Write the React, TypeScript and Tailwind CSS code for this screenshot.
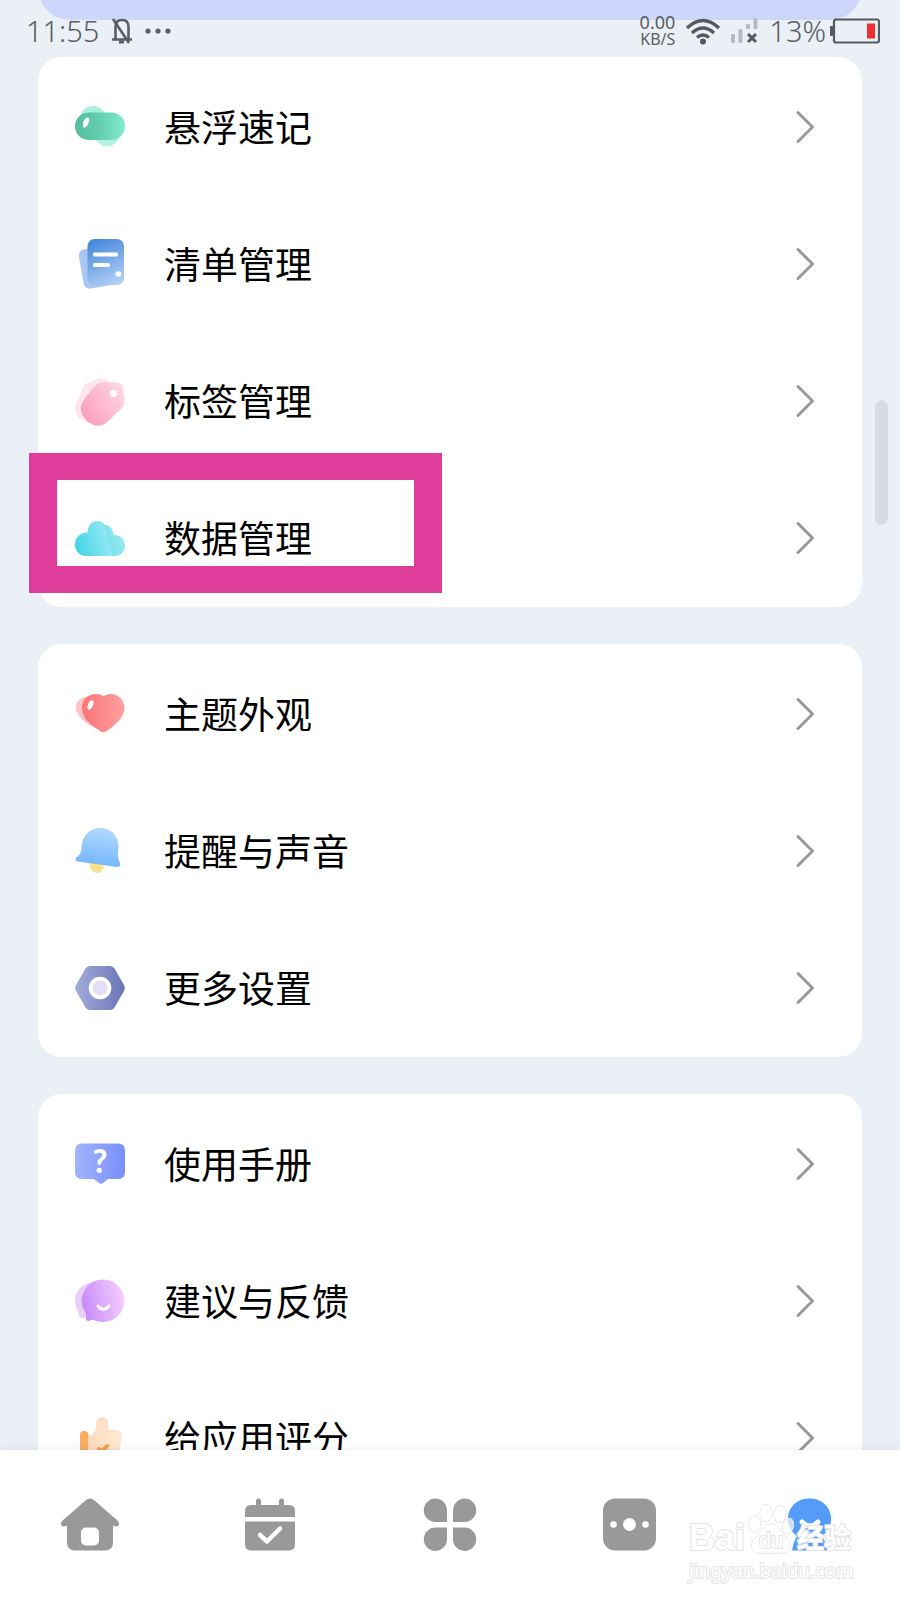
import type { ReactNode } from 'react';

type Item = {
  label: string;
  icon: ReactNode;
  highlighted?: boolean;
};

const PillIcon = () => (
  <svg viewBox="0 0 50 50" className="size-[50px] shrink-0" aria-hidden="true">
    <defs>
      <linearGradient id="pill" x1="0" y1="0" x2="1" y2="0">
        <stop offset="0" stopColor="#56bd9f" />
        <stop offset="0.5" stopColor="#65ceb0" />
        <stop offset="0.51" stopColor="#63d0b0" />
        <stop offset="1" stopColor="#80ebcd" />
      </linearGradient>
    </defs>
    <circle cx="18" cy="17" r="13" fill="#a5efdb" />
    <circle cx="32" cy="32" r="12.5" fill="#b5f3e3" />
    <rect x="0" y="10.5" width="50" height="27.500" rx="13.7" fill="url(#pill)" />
    <ellipse cx="11" cy="20.5" rx="2.6" ry="5.4" fill="#fff" transform="rotate(24 11 20.5)" />
  </svg>
);

const ListIcon = () => (
  <svg viewBox="0 0 50 50" className="size-[50px] shrink-0" aria-hidden="true">
    <defs>
      <linearGradient id="doc" x1="0.3" y1="0" x2="0.7" y2="1">
        <stop offset="0" stopColor="#4789dd" />
        <stop offset="1" stopColor="#b1cff5" />
      </linearGradient>
    </defs>
    <rect x="6" y="8" width="34" height="40" rx="6" fill="#a9c7f0" transform="rotate(-10 23 28)" />
    <rect x="12.500" y="0" width="36.500" height="46" rx="7" fill="url(#doc)" />
    <rect x="18" y="13.500" width="25" height="4" rx="1.500" fill="#fff" />
    <rect x="18" y="24" width="17" height="4" rx="1.500" fill="#fff" />
    <circle cx="43.300" cy="35" r="2.800" fill="#fff" />
  </svg>
);

const TagIcon = () => (
  <svg viewBox="0 0 50 50" className="size-[50px] shrink-0" aria-hidden="true">
    <defs>
      <linearGradient id="tag" x1="0" y1="0.8" x2="1" y2="0.2">
        <stop offset="0" stopColor="#fc9bbd" />
        <stop offset="1" stopColor="#ffd7e2" />
      </linearGradient>
    </defs>
    <path d="M12 7 L23 3 Q27 1 32 4 L44 12 L25 45 Q14 47 7 44 Q2 42 1 36 Q-1 31 2 25 L8 11 Q9 8 12 7Z" fill="#ffe6ed" />
    <path d="M28 6.500 L42 6.500 Q47 7 48 11 L49.500 24 Q50 29 46 33 L32 46 Q27 51 20 49.500 Q13 48 8 40 Q3.500 32 8 25 L19 11 Q23 6.500 28 6.500Z" fill="url(#tag)" />
    <circle cx="38.300" cy="17.500" r="3.500" fill="#fff" />
  </svg>
);

const CloudIcon = () => (
  <svg viewBox="0 0 50 50" className="size-[50px] shrink-0" aria-hidden="true">
    <defs>
      <linearGradient id="cloud" x1="0" y1="0.6" x2="1" y2="0.4">
        <stop offset="0" stopColor="#45d5e5" />
        <stop offset="0.64" stopColor="#8de8f2" />
        <stop offset="0.65" stopColor="#7fe3ee" />
        <stop offset="1" stopColor="#98e9f2" />
      </linearGradient>
    </defs>
    <path d="M11 43 C4 43 0 37.500 0 31.500 C0 24 5.500 19.500 12.500 19.500 C13 12 17 8 22.500 8 C26 8 28.500 10 30 12 C35 12 38.500 17 38.500 22 C45.500 22 50 26.500 50 32.500 C50 38.500 45.500 43 40 43Z" fill="url(#cloud)" />
  </svg>
);

const HeartIcon = () => (
  <svg viewBox="0 0 50 50" className="size-[50px] shrink-0" aria-hidden="true">
    <defs>
      <linearGradient id="heart" x1="0" y1="0" x2="1" y2="0">
        <stop offset="0" stopColor="#fa7477" />
        <stop offset="1" stopColor="#fea09f" />
      </linearGradient>
    </defs>
    <path d="M25 41 C13 36 1 29 1 18 C1 11 8 7 16 7 L38 9 L31 41Z" fill="#fcc4c6" />
    <path d="M28.500 7.500 C33 4.500 37 4.500 41 6 C46 8 49.500 13 49.500 19.500 C49 29 40 36.500 31 42.500 Q28.500 44 26 42.500 C17 37 7.500 30 7 19.500 C6.500 13 10.500 8 15.500 6 C20 4.500 25 4.500 28.500 7.500Z" fill="url(#heart)" />
    <ellipse cx="15.500" cy="16" rx="2.400" ry="5" fill="#fff" transform="rotate(24 15.500 16)" />
  </svg>
);

const BellIcon = () => (
  <svg viewBox="0 0 50 50" className="size-[50px] shrink-0" aria-hidden="true">
    <defs>
      <linearGradient id="bell" x1="0.6" y1="0" x2="0.4" y2="1">
        <stop offset="0" stopColor="#b3daff" />
        <stop offset="1" stopColor="#71b5fc" />
      </linearGradient>
    </defs>
    <path d="M14 37 Q22 36 29 40 Q28 47 22 47 Q15 46 14 37Z" fill="#fce288" />
    <path d="M6.500 21 C7.500 9 15 2 25.500 2 C36 2 43.500 10 43.500 20 L43 29 C42.500 32 44 34 45 37 C46 40 44 41.500 42 41 L3 35.500 C0 35 0 32 2 31 C5 29 6.500 26 6.500 21Z" fill="url(#bell)" />
  </svg>
);

const GearIcon = () => (
  <svg viewBox="0 0 50 50" className="size-[50px] shrink-0" aria-hidden="true">
    <defs>
      <linearGradient id="gear" x1="0" y1="0" x2="1" y2="0">
        <stop offset="0" stopColor="#a3abdc" />
        <stop offset="1" stopColor="#6b75b5" />
      </linearGradient>
    </defs>
    <path d="M15 3 H35 Q38 3 39.500 5.500 L49 22 Q50.500 25 49 28 L39.500 44.500 Q38 47 35 47 H15 Q12 47 10.500 44.500 L1 28 Q-0.500 25 1 22 L10.500 5.500 Q12 3 15 3Z" fill="url(#gear)" />
    <circle cx="25" cy="25" r="11.300" fill="#fff" />
    <circle cx="25" cy="25" r="7.600" fill="#e0e1f7" />
  </svg>
);

const ManualIcon = () => (
  <svg viewBox="0 0 50 50" className="size-[50px] shrink-0" aria-hidden="true">
    <defs>
      <linearGradient id="manual" x1="0" y1="0" x2="1" y2="0">
        <stop offset="0" stopColor="#a3b3fc" />
        <stop offset="1" stopColor="#768ffa" />
      </linearGradient>
    </defs>
    <path d="M7 4.500 H43 Q50 4.500 50 11.500 V33 Q50 40 43 40 H33 L28 44 Q26 45.500 24 44 L19 40 H7 Q0 40 0 33 V11.500 Q0 4.500 7 4.500Z" fill="url(#manual)" />
    <text x="25" y="34" textAnchor="middle" fontSize="32" fontWeight="900" fontFamily="Lato, sans-serif" fill="#fff">?</text>
  </svg>
);

const FeedbackIcon = () => (
  <svg viewBox="0 0 50 50" className="size-[50px] shrink-0" aria-hidden="true">
    <defs>
      <linearGradient id="feedback" x1="0" y1="0.6" x2="1" y2="0.4">
        <stop offset="0" stopColor="#c68bf8" />
        <stop offset="1" stopColor="#f5cdfd" />
      </linearGradient>
    </defs>
    <path d="M22 6 C9 5 0 14 0 25 C0 30 3 34 3.500 37 Q3 42 7 42 L22 41Z" fill="#e8cffb" />
    <path d="M28.500 3.500 A21.300 21.300 0 1 1 20 44.500 Q17 43 14 45 Q10.500 45.500 11 41 Q11.500 38 10 36 A21.300 21.300 0 0 1 28.500 3.500Z" fill="url(#feedback)" />
    <path d="M23 30 Q28 36.500 34 30" fill="none" stroke="#fff" strokeWidth="3" strokeLinecap="round" />
  </svg>
);

const RateIcon = () => (
  <svg viewBox="0 0 50 50" className="size-[50px] shrink-0" aria-hidden="true">
    <defs>
      <linearGradient id="rate" x1="0" y1="0" x2="1" y2="0">
        <stop offset="0" stopColor="#fcdcc0" />
        <stop offset="1" stopColor="#ffe8d2" />
      </linearGradient>
    </defs>
    <path d="M14 23 Q21 20 21 14 V10 Q22 4 27 4 Q33 4 33.500 10 V17 H40 Q47 17 47 23 L44 42 Q43 47 38 47 H14Z" fill="url(#rate)" />
    <path d="M5 22 Q5 18 9 18 Q13.500 18 13.500 22 V47 H5Z" fill="#f9ac60" />
    <path d="M24 36 L28 38 L32 33" fill="none" stroke="#f6a04c" strokeWidth="4" strokeLinecap="round" strokeLinejoin="round" />
  </svg>
);

const groups: Item[][] = [
  [
    { label: '悬浮速记', icon: <PillIcon /> },
    { label: '清单管理', icon: <ListIcon /> },
    { label: '标签管理', icon: <TagIcon /> },
    { label: '数据管理', icon: <CloudIcon />, highlighted: true },
  ],
  [
    { label: '主题外观', icon: <HeartIcon /> },
    { label: '提醒与声音', icon: <BellIcon /> },
    { label: '更多设置', icon: <GearIcon /> },
  ],
  [
    { label: '使用手册', icon: <ManualIcon /> },
    { label: '建议与反馈', icon: <FeedbackIcon /> },
    { label: '给应用评分', icon: <RateIcon /> },
  ],
];

function StatusBar() {
  return (
    <header className="absolute inset-x-0 top-0 z-10 flex h-[62px] items-center justify-between pr-5 pl-[26px] font-['Noto_Sans',sans-serif] text-[29px] font-light text-[#5a5d62]">
      <div className="flex items-center gap-3">
        <span>11:55</span>
        <svg viewBox="0 0 22 26" className="h-[26px] w-[22px]" fill="none" stroke="#5a5d62" strokeWidth="2.6" aria-label="静音">
          <path d="M4.500 21 V9 Q4.500 2 11 2 Q17.500 2 17.500 9 V21" />
          <path d="M1 21.500 H21 M2 1 L18 25" />
          <path d="M8 24 H13" strokeWidth="3" />
        </svg>
        <svg viewBox="0 0 26 6" className="h-[6px] w-[26px]" fill="#5a5d62" aria-hidden="true">
          <circle cx="3" cy="3" r="2.600" />
          <circle cx="13" cy="3" r="2.600" />
          <circle cx="23" cy="3" r="2.600" />
        </svg>
      </div>

      <div className="flex items-center">
        <div className="mr-2.5 text-right font-normal">
          <div className="text-[18px] leading-[17px]">0.00</div>
          <div className="text-[16px] leading-[17px]">KB/S</div>
        </div>
        <svg viewBox="0 0 36 28" className="mr-2.5 h-7 w-9" fill="none" stroke="#56595e" strokeWidth="3.4" aria-label="Wi-Fi">
          <path d="M2 11 Q18 -4 34 11" />
          <path d="M7 16 Q18 6 29 16" />
          <path d="M12 20.500 Q18 15.500 24 20.500" />
          <circle cx="18" cy="24.500" r="3" fill="#56595e" stroke="none" />
        </svg>
        <svg viewBox="0 0 28 26" className="mr-2.5 h-[26px] w-7" aria-label="无信号">
          <g fill="#b6bac1">
            <rect x="0" y="16" width="4" height="9" rx="1" />
            <rect x="7.500" y="11" width="4" height="14" rx="1" />
            <rect x="15" y="6" width="4" height="5" rx="1" />
            <rect x="22.500" y="0" width="4" height="11" rx="1" />
          </g>
          <path d="M17 16 L25 24 M25 16 L17 24" stroke="#56595e" strokeWidth="3" />
        </svg>
        <span className="mr-1">13%</span>
        <svg viewBox="0 0 50 26" className="h-[26px] w-[50px]" aria-label="电量">
          <rect x="0" y="8" width="3" height="10" rx="1" fill="#56595e" />
          <rect x="4" y="1.500" width="45" height="23" rx="2" fill="none" stroke="#56595e" strokeWidth="2.200" />
          <rect x="37" y="5.500" width="8" height="15" fill="#f03030" />
        </svg>
      </div>
    </header>
  );
}

function Row({ label, icon, highlighted }: Item) {
  return (
    <li className="relative">
      <a href="#" className="flex h-[137px] items-center pr-[47px] pl-[37px]">
        {icon}
        <span className="ml-[39px] flex-1 text-[37px] text-black">{label}</span>
        <svg viewBox="0 0 20 34" className="h-[34px] w-5" fill="none" stroke="#999" strokeWidth="3" strokeLinecap="round" strokeLinejoin="round" aria-hidden="true">
          <path d="M3 2.500 L17.500 17 L3 31.500" />
        </svg>
      </a>
      {highlighted && (
        <div className="pointer-events-none absolute -top-4 -left-[9px] h-[140px] w-[413px] border-x-[28px] border-y-[27px] border-[#df3d9b]" />
      )}
    </li>
  );
}

function Watermark() {
  return (
    <div className="pointer-events-none absolute right-[49px] bottom-4 w-[162px] font-['Noto_Sans','Noto_Sans_CJK_SC',sans-serif] whitespace-nowrap text-white [-webkit-text-stroke:2px_#e4e4e4] [paint-order:stroke_fill]">
      <div className="flex items-end justify-between">
        <span className="font-['Liberation_Sans',sans-serif] text-[36px] leading-10 font-bold">Bai</span>
        <div className="relative flex h-[54px] w-[46px] items-end justify-center">
          <svg viewBox="0 0 46 54" className="absolute inset-0" fill="#fff" fillOpacity="0.7" stroke="#dedede" aria-hidden="true">
            <ellipse cx="7" cy="20" rx="6" ry="8" />
            <ellipse cx="18" cy="9" rx="6" ry="8.500" />
            <ellipse cx="32" cy="10" rx="6" ry="8.500" transform="rotate(10 32 10)" />
            <ellipse cx="40" cy="22" rx="5.500" ry="8" transform="rotate(15 40 22)" />
            <path d="M23 20 C31 20 32 28 38 33 C45 39 44 49 34 49 H12 C2 49 1 39 8 33 C14 28 15 20 23 20Z" />
          </svg>
          <span className="relative font-['Liberation_Sans',sans-serif] text-[22px] leading-[34px]">du</span>
        </div>
        <span className="text-[27px] leading-10 font-bold">经验</span>
      </div>
      <div className="text-[19px] leading-[26px]">jingyan.baidu.com</div>
    </div>
  );
}

function BottomNav() {
  return (
    <nav className="relative z-10 grid h-[150px] shrink-0 grid-cols-5 bg-white shadow-[0_-2px_8px_rgba(0,0,0,0.06)]">
      <a href="#" aria-label="首页" className="flex items-center justify-center">
        <svg viewBox="0 0 60 60" className="size-[60px]" fill="#999">
          <path d="M26 5 Q30 2 34 5 L58 26 Q60 29 58 31 Q57 32 53 30.500 V47 Q53 55.500 45 55.500 H15 Q7 55.500 7 47 V30.500 Q3 32 2 31 Q0 29 2 26Z" />
          <rect x="21" y="32.500" width="18" height="18" rx="5" fill="#fff" />
        </svg>
      </a>
      <a href="#" aria-label="日程" className="flex items-center justify-center">
        <svg viewBox="0 0 60 60" className="size-[60px]" fill="#999">
          <rect x="16" y="3.500" width="5" height="12" rx="2.500" />
          <rect x="39" y="3.500" width="5" height="12" rx="2.500" />
          <path d="M5 22 V16 Q5 10 11 10 H49 Q55 10 55 16 V22Z" />
          <path d="M5 26.500 H55 V49 Q55 55.500 49 55.500 H11 Q5 55.500 5 49Z" />
          <path d="M20 40 L27 46.500 L40 33.500" fill="none" stroke="#fff" strokeWidth="4.500" strokeLinecap="round" strokeLinejoin="round" />
        </svg>
      </a>
      <a href="#" aria-label="应用" className="flex items-center justify-center">
        <svg viewBox="0 0 60 60" className="size-[60px]" fill="#999">
          <path d="M27 27 H15.500 A11.600 11.700 0 1 1 27 15.500Z" />
          <path d="M33 27 V15.500 A11.600 11.700 0 1 1 44.500 27Z" />
          <path d="M27 32.500 V44 A11.600 11.700 0 1 1 15.500 32.500Z" />
          <path d="M33 32.500 H44.500 A11.600 11.700 0 1 1 33 44Z" />
        </svg>
      </a>
      <a href="#" aria-label="更多" className="flex items-center justify-center">
        <svg viewBox="0 0 60 60" className="size-[60px]" fill="#999">
          <rect x="3" y="3.500" width="53" height="52" rx="12" />
          <g fill="#fff">
            <circle cx="13.500" cy="29.500" r="3.300" />
            <circle cx="29.500" cy="29.500" r="6.500" />
            <circle cx="45.500" cy="29.500" r="3.300" />
          </g>
        </svg>
      </a>
      <a href="#" aria-label="我的" className="flex items-center justify-center">
        <svg viewBox="0 0 60 60" className="size-[60px]" fill="#559bf8">
          <path d="M30 3.500 A20.500 20.500 0 0 1 42 41 Q45 45 47 55.500 H12 Q14 45 17 41 A20.500 20.500 0 0 1 30 3.500Z" />
          <path d="M22 27 Q30 35 38 27" fill="none" stroke="#fff" strokeWidth="5" strokeLinecap="round" />
        </svg>
      </a>
      <Watermark />
    </nav>
  );
}

function App() {
  return (
    <div className="relative flex h-screen flex-col overflow-hidden bg-[#ebf0f7] font-['Noto_Sans_CJK_SC',sans-serif]">
      <StatusBar />

      <main className="min-h-0 flex-1 overflow-y-auto px-[38px] [scrollbar-width:none]">
        {/* Borde inferior de la tarjeta de perfil */}
        <div className="mb-[37px] h-5 overflow-hidden">
          <div className="-mt-10 h-[60px] rounded-b-[32px] bg-[#cfd6fc]" />
        </div>

        <div className="flex flex-col gap-[37px] pb-[37px]">
          {groups.map((items) => (
            <ul key={items[0].label} className="rounded-[24px] bg-white py-px">
              {items.map((item) => (
                <Row key={item.label} {...item} />
              ))}
            </ul>
          ))}
        </div>
      </main>

      {/* Indicador de scroll */}
      <div className="absolute top-[400px] right-3 h-[125px] w-[13px] rounded-full bg-[#d8dce2]" />

      <BottomNav />
    </div>
  );
}

export default App;
